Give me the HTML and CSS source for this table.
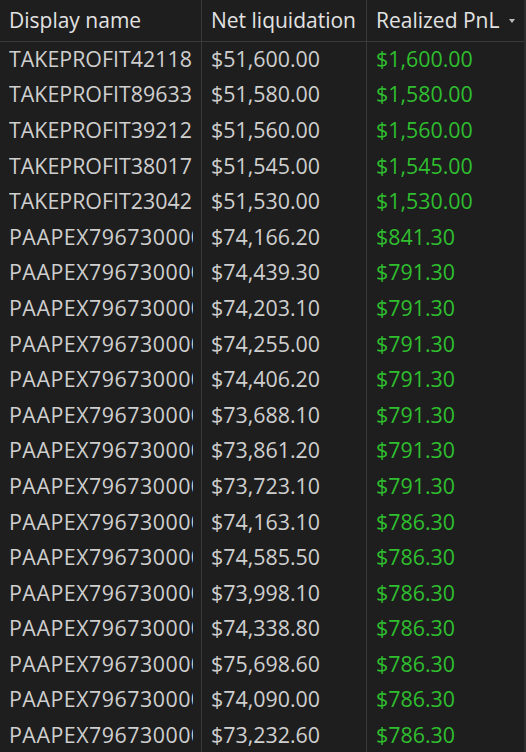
FILE: index.html
```html
<!DOCTYPE html>
<html>
<head>
<meta charset="utf-8">
<link rel="stylesheet" href="styles.css">
</head>
<body>
<div class="grid">
  <div class="row head">
    <div class="cell">Display name</div>
    <div class="cell">Net liquidation</div>
    <div class="cell sort">Realized PnL <span class="arrow"></span></div>
  </div>
  <div class="row"><div class="cell"><span class="txt">TAKEPROFIT42118</span></div><div class="cell">$51,600.00</div><div class="cell pos">$1,600.00</div></div>
  <div class="row"><div class="cell"><span class="txt">TAKEPROFIT89633</span></div><div class="cell">$51,580.00</div><div class="cell pos">$1,580.00</div></div>
  <div class="row"><div class="cell"><span class="txt">TAKEPROFIT39212</span></div><div class="cell">$51,560.00</div><div class="cell pos">$1,560.00</div></div>
  <div class="row"><div class="cell"><span class="txt">TAKEPROFIT38017</span></div><div class="cell">$51,545.00</div><div class="cell pos">$1,545.00</div></div>
  <div class="row"><div class="cell"><span class="txt">TAKEPROFIT23042</span></div><div class="cell">$51,530.00</div><div class="cell pos">$1,530.00</div></div>
  <div class="row"><div class="cell"><span class="txt long">PAAPEX7967300000</span></div><div class="cell">$74,166.20</div><div class="cell pos">$841.30</div></div>
  <div class="row"><div class="cell"><span class="txt long">PAAPEX7967300000</span></div><div class="cell">$74,439.30</div><div class="cell pos">$791.30</div></div>
  <div class="row"><div class="cell"><span class="txt long">PAAPEX7967300000</span></div><div class="cell">$74,203.10</div><div class="cell pos">$791.30</div></div>
  <div class="row"><div class="cell"><span class="txt long">PAAPEX7967300000</span></div><div class="cell">$74,255.00</div><div class="cell pos">$791.30</div></div>
  <div class="row"><div class="cell"><span class="txt long">PAAPEX7967300000</span></div><div class="cell">$74,406.20</div><div class="cell pos">$791.30</div></div>
  <div class="row"><div class="cell"><span class="txt long">PAAPEX7967300000</span></div><div class="cell">$73,688.10</div><div class="cell pos">$791.30</div></div>
  <div class="row"><div class="cell"><span class="txt long">PAAPEX7967300000</span></div><div class="cell">$73,861.20</div><div class="cell pos">$791.30</div></div>
  <div class="row"><div class="cell"><span class="txt long">PAAPEX7967300000</span></div><div class="cell">$73,723.10</div><div class="cell pos">$791.30</div></div>
  <div class="row"><div class="cell"><span class="txt long">PAAPEX7967300000</span></div><div class="cell">$74,163.10</div><div class="cell pos">$786.30</div></div>
  <div class="row"><div class="cell"><span class="txt long">PAAPEX7967300000</span></div><div class="cell">$74,585.50</div><div class="cell pos">$786.30</div></div>
  <div class="row"><div class="cell"><span class="txt long">PAAPEX7967300000</span></div><div class="cell">$73,998.10</div><div class="cell pos">$786.30</div></div>
  <div class="row"><div class="cell"><span class="txt long">PAAPEX7967300000</span></div><div class="cell">$74,338.80</div><div class="cell pos">$786.30</div></div>
  <div class="row"><div class="cell"><span class="txt long">PAAPEX7967300000</span></div><div class="cell">$75,698.60</div><div class="cell pos">$786.30</div></div>
  <div class="row"><div class="cell"><span class="txt long">PAAPEX7967300000</span></div><div class="cell">$74,090.00</div><div class="cell pos">$786.30</div></div>
  <div class="row"><div class="cell"><span class="txt long">PAAPEX7967300000</span></div><div class="cell">$73,232.60</div><div class="cell pos">$786.30</div></div>
</div>
</body>
</html>
```

FILE: styles.css
```css
html, body {
  margin: 0;
  padding: 0;
  background: #1e1e1e;
  overflow: hidden;
}
body {
  font-family: "Open Sans", "Noto Sans", sans-serif;
  font-size: 21.4px;
  color: #cfcfcf;
}
.grid {
  width: 526px;
  border-right: 2px solid #2c2c2c;
  box-sizing: border-box;
}
.row {
  display: grid;
  grid-template-columns: 201px 165px 1fr;
  height: 35.6px;
  align-items: stretch;
}
.row.head {
  height: 42px;
  font-size: 21px;
  border-bottom: 1px solid #3a3a3a;
  box-sizing: border-box;
  color: #e2e2e2;
}
.cell {
  display: flex;
  align-items: center;
  padding: 0 8px 3px 9px;
  white-space: nowrap;
  overflow: hidden;
  min-width: 0;
}
.head .cell {
  padding-bottom: 2px;
}
.cell + .cell {
  border-left: 1px solid #3a3a3a;
}
.txt {
  display: block;
  min-width: 0;
  overflow: hidden;
  white-space: nowrap;
}
.long {
  letter-spacing: 0.5px;
}
.pos {
  color: #2fbf2f;
}
.sort {
  position: relative;
}
.arrow {
  position: absolute;
  right: 9px;
  top: 19px;
  width: 0;
  height: 0;
  border-left: 3px solid transparent;
  border-right: 3px solid transparent;
  border-top: 4px solid #bdbdbd;
}
```
